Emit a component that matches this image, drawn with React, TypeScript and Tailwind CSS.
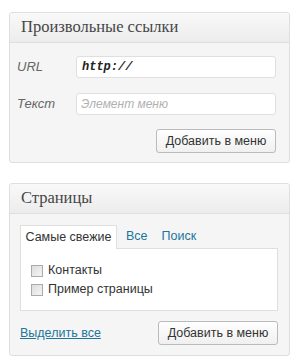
import React from 'react';

const sans = { fontFamily: '"Liberation Sans", Arial, sans-serif' };

const Panel: React.FC<{ title: string; children: React.ReactNode; className?: string }> = ({ title, children, className }) => (
  <div className={`w-[281px] border border-[#dfdfdf] rounded-[3px] bg-[#f5f5f5] ${className ?? ''}`}>
    <div className="h-[30px] flex items-center pl-[11px] border-b border-[#dfdfdf] bg-gradient-to-b from-[#f9f9f9] to-[#ececec] rounded-t-[3px]">
      <span className="text-[16.5px] text-[#464646] font-['Liberation_Serif',Georgia,serif] leading-none">{title}</span>
    </div>
    {children}
  </div>
);

const AddButton: React.FC = () => (
  <button className="w-[120px] h-[24px] rounded-[3px] border border-[#bbbbbb] bg-gradient-to-b from-[#fefefe] to-[#f0f0f0] text-[12.5px] text-[#333]" style={sans}>
    Добавить в меню
  </button>
);

const Check: React.FC<{ label: string }> = ({ label }) => (
  <label className="flex items-center gap-[5px] h-[19px] text-[12.5px] text-[#333]" style={sans}>
    <span className="w-[12px] h-[12px] border border-[#aaaaaa] bg-gradient-to-br from-[#dddddd] to-[#f4f4f4]" />
    {label}
  </label>
);

export default function App() {
  return (
    <div className="w-[300px] h-[360px] bg-white pt-[12px] pl-[9px]">
      <Panel title="Произвольные ссылки">
        <div className="pt-[13px] pr-[13px] pb-[9px]">
          <div className="flex items-center">
            <span className="w-[66px] pl-[7px] text-[13px] italic text-[#666]" style={sans}>URL</span>
            <div className="w-[200px] h-[22px] border border-[#dfdfdf] rounded-[3px] bg-white flex items-center pl-[5px] text-[12px] italic font-semibold text-[#222] font-['Liberation_Mono',monospace]">
              http://
            </div>
          </div>
          <div className="flex items-center mt-[15px]">
            <span className="w-[66px] pl-[7px] text-[13px] italic text-[#666]" style={sans}>Текст</span>
            <div className="w-[200px] h-[22px] border border-[#dfdfdf] rounded-[3px] bg-white flex items-center pl-[4px] text-[12px] italic text-[#b0b0b0]" style={sans}>
              Элемент меню
            </div>
          </div>
          <div className="flex justify-end mt-[14px]">
            <AddButton />
          </div>
        </div>
      </Panel>

      <Panel title="Страницы" className="mt-[20px]">
        <div className="pt-[10px] px-[10px] pb-[10px]">
          <div className="flex items-end text-[12.5px]" style={sans}>
            <div className="h-[24px] w-[97px] justify-center border border-b-0 border-[#dfdfdf] bg-white text-[#333] flex items-center relative top-[1px]">
              Самые свежие
            </div>
            <span className="ml-[9px] h-[23px] flex items-center text-[#21759b]">Все</span>
            <span className="ml-[14px] h-[23px] flex items-center text-[#21759b]">Поиск</span>
          </div>
          <div className="h-[63px] w-[258px] border border-[#dfdfdf] bg-white pt-[12px] pl-[10px]">
            <Check label="Контакты" />
            <Check label="Пример страницы" />
          </div>
          <div className="flex items-center justify-between mt-[10px] pr-[1px]">
            <a className="text-[12.5px] text-[#21759b] underline" style={sans}>Выделить все</a>
            <AddButton />
          </div>
        </div>
      </Panel>
    </div>
  );
}
